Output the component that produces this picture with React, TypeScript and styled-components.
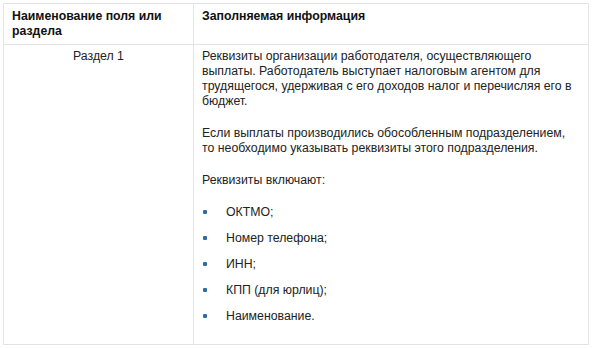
import React from "react";
import styled, { createGlobalStyle } from "styled-components";

const Global = createGlobalStyle`
  html, body { margin: 0; padding: 0; background: #fff; }
  body { font-family: "Liberation Sans", Arial, sans-serif; color: #222; }
`;

const Table = styled.div`
  margin: 3px 0 0 3px;
  width: 586px;
  display: grid;
  grid-template-columns: 190px 1fr;
  border: 1px solid #e4e4e4;
  box-sizing: border-box;
`;

const HeadCell = styled.div<{ $last?: boolean }>`
  padding: 5px 8px 5px 8px;
  font-size: 12.3px;
  line-height: 15px;
  font-weight: bold;
  color: #111;
  border-bottom: 1px solid #e4e4e4;
  ${(p) => (p.$last ? "" : "border-right: 1px solid #e4e4e4;")}
`;

const NameCell = styled.div`
  padding: 4px 8px;
  font-size: 12.3px;
  line-height: 15px;
  text-align: center;
  border-right: 1px solid #e4e4e4;
  color: #222;
`;

const InfoCell = styled.div`
  padding: 4px 8px 20px 8px;
  font-size: 12.3px;
  line-height: 15px;
  color: #222;
`;

const Para = styled.p`
  margin: 0 0 17px 0;
`;

const List = styled.ul`
  list-style: none;
  margin: 0;
  padding: 0;
  display: flex;
  flex-direction: column;
  gap: 11px;
`;

const Item = styled.li`
  position: relative;
  padding-left: 24px;
  &::before {
    content: "";
    position: absolute;
    left: 1px;
    top: 5px;
    width: 4px;
    height: 4px;
    border-radius: 1px;
    background: #2f6ea5;
  }
`;

export default function App() {
  return (
    <>
      <Global />
      <Table>
        <HeadCell>Наименование поля или раздела</HeadCell>
        <HeadCell $last>Заполняемая информация</HeadCell>
        <NameCell>Раздел 1</NameCell>
        <InfoCell>
          <Para>
            Реквизиты организации работодателя, осуществляющего выплаты.
            Работодатель выступает налоговым агентом для трудящегося, удерживая
            с его доходов налог и перечисляя его в бюджет.
          </Para>
          <Para>
            Если выплаты производились обособленным подразделением, то
            необходимо указывать реквизиты этого подразделения.
          </Para>
          <Para>Реквизиты включают:</Para>
          <List>
            <Item>ОКТМО;</Item>
            <Item>Номер телефона;</Item>
            <Item>ИНН;</Item>
            <Item>КПП (для юрлиц);</Item>
            <Item>Наименование.</Item>
          </List>
        </InfoCell>
      </Table>
    </>
  );
}
